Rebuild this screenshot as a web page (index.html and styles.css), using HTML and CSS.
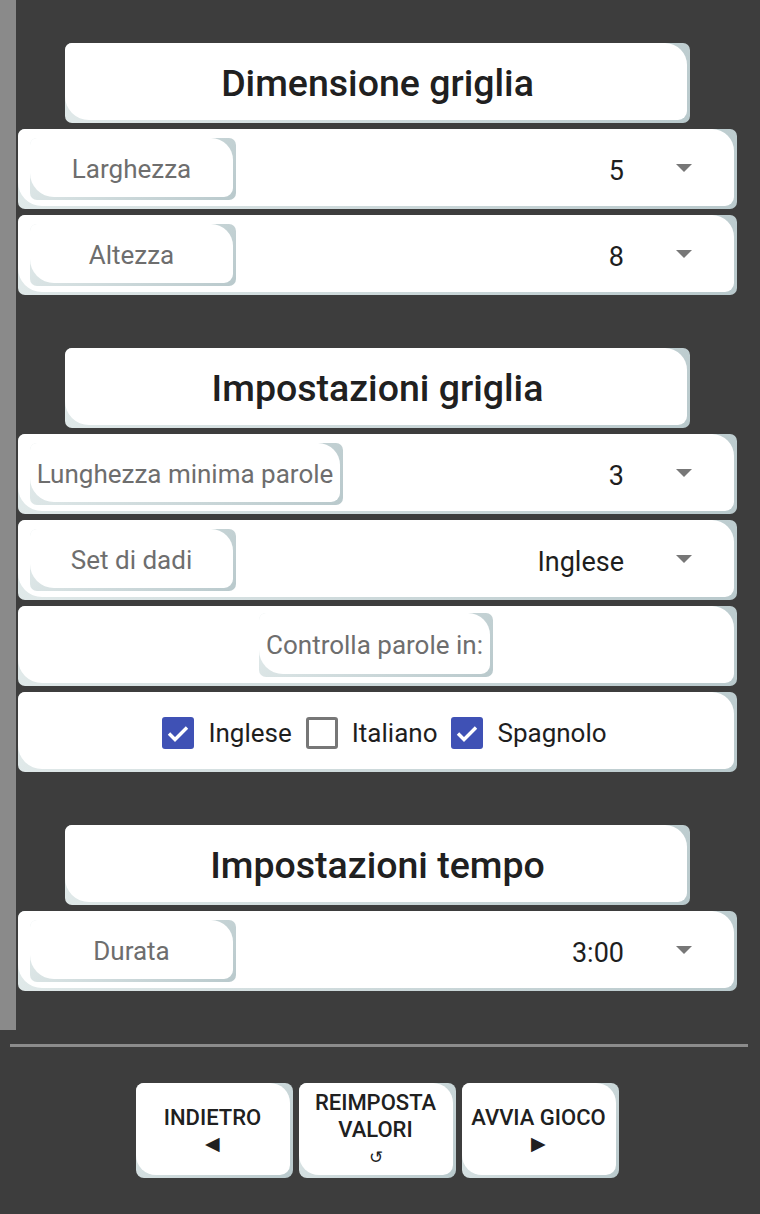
FILE: index.html
```html
<!DOCTYPE html>
<html lang="it">

<head>
  <meta charset="UTF-8" />
  <meta name="viewport" content="width=device-width, initial-scale=1.0" />
  <title>Impostazioni partita</title>
  <link rel="stylesheet" href="styles.css">
</head>

<body>
  <main class="settings">
    <div class="card header">
      <div class="face"><h2>Dimensione griglia</h2></div>
    </div>
    <div class="card row">
      <div class="face">
        <div class="card pill"><div class="face">Larghezza</div></div>
        <span class="value">5</span>
        <span class="arrow"></span>
      </div>
    </div>
    <div class="card row">
      <div class="face">
        <div class="card pill"><div class="face">Altezza</div></div>
        <span class="value">8</span>
        <span class="arrow"></span>
      </div>
    </div>

    <div class="card header spaced">
      <div class="face"><h2>Impostazioni griglia</h2></div>
    </div>
    <div class="card row">
      <div class="face">
        <div class="card pill wide"><div class="face">Lunghezza minima parole</div></div>
        <span class="value">3</span>
        <span class="arrow"></span>
      </div>
    </div>
    <div class="card row">
      <div class="face">
        <div class="card pill"><div class="face">Set di dadi</div></div>
        <span class="value">Inglese</span>
        <span class="arrow"></span>
      </div>
    </div>
    <div class="card row">
      <div class="face centered">
        <div class="card pill check-title"><div class="face">Controlla parole in:</div></div>
      </div>
    </div>
    <div class="card row">
      <div class="face centered checks">
        <label class="check"><span class="box on"></span>Inglese</label>
        <label class="check"><span class="box"></span>Italiano</label>
        <label class="check"><span class="box on"></span>Spagnolo</label>
      </div>
    </div>

    <div class="card header spaced">
      <div class="face"><h2>Impostazioni tempo</h2></div>
    </div>
    <div class="card row">
      <div class="face">
        <div class="card pill"><div class="face">Durata</div></div>
        <span class="value">3:00</span>
        <span class="arrow"></span>
      </div>
    </div>
  </main>

  <footer class="footer">
    <hr class="divider">
    <div class="buttons">
      <button class="card btn"><span class="face">INDIETRO<small>&#9664;</small></span></button>
      <button class="card btn"><span class="face">REIMPOSTA<br>VALORI<small class="reset">&#8634;</small></span></button>
      <button class="card btn"><span class="face">AVVIA GIOCO<small>&#9654;</small></span></button>
    </div>
  </footer>
</body>

</html>
```

FILE: styles.css
```css
* {
  margin: 0;
  padding: 0;
  box-sizing: border-box;
  font-family: Roboto, 'Noto Sans', sans-serif;
}

body {
  background-color: #3d3d3d;
  width: 760px;
  height: 1214px;
  overflow: hidden;
}

.settings {
  height: 1030px;
  border-left: 16px solid #8a8a8a;
  padding: 43px 23px 0 2px;
  display: flex;
  flex-direction: column;
  gap: 6px;
}

/* bevelled white cards: blue-grey base with a white face on top */
.card {
  background: linear-gradient(135deg, #e4ecec 0%, #b9c9cc 100%);
  border-radius: 7px;
  display: flex;
}

.card > .face {
  flex: 1;
  background-color: #fff;
  border-radius: 7px 22px 9px 24px;
  margin: 0 3px 3px 0;
  display: flex;
  align-items: center;
}

.header {
  height: 80px;
  margin: 0 47px;
}

.header > .face {
  justify-content: center;
}

.header.spaced {
  margin-top: 47px;
}

h2 {
  font-size: 37.5px;
  font-weight: 500;
  color: #202020;
  padding: 2px 0 0 3px;
}

.row {
  height: 80px;
}

.row > .face {
  padding: 0 42px 0 12px;
}

.pill {
  width: 206px;
  height: 62px;
  margin-top: 3px;
}

.pill > .face {
  justify-content: center;
  font-size: 26px;
  color: #6e6e6e;
  white-space: nowrap;
  padding-top: 3px;
}

.pill.wide {
  width: 313px;
}

.value {
  margin-left: auto;
  font-size: 27px;
  color: #1e1e1e;
  padding-top: 6px;
}

.arrow {
  width: 0;
  height: 0;
  border-left: 8px solid transparent;
  border-right: 8px solid transparent;
  border-top: 8px solid #777;
  margin-left: 52px;
}

.row > .face.centered {
  justify-content: center;
  padding: 0;
}

.pill.check-title {
  width: 234px;
  height: 64px;
  margin-top: 0;
}

.row > .face.checks {
  gap: 14px;
  padding-left: 17px;
}

.check {
  display: flex;
  align-items: center;
  gap: 14px;
  font-size: 26px;
  color: #1e1e1e;
  padding-top: 4px;
}

.box {
  width: 32px;
  height: 32px;
  border: 3px solid #777;
  border-radius: 3px;
}

.box.on {
  border: none;
  background: #3f51b5 url("data:image/svg+xml,%3Csvg xmlns='http://www.w3.org/2000/svg' viewBox='0 0 32 32'%3E%3Cpath d='M7 16.5l6 6L25 10.5' fill='none' stroke='%23fff' stroke-width='3.4'/%3E%3C/svg%3E") no-repeat center / 100%;
}

.footer {
  padding-top: 14px;
}

.divider {
  border: none;
  height: 3px;
  background-color: #8c8c8c;
  margin: 0 12px 0 10px;
}

.buttons {
  display: flex;
  justify-content: center;
  gap: 6px;
  margin-top: 36px;
  padding-right: 6px;
}

.btn {
  width: 157px;
  height: 95px;
  border: none;
  border-radius: 8px;
}

.btn > .face {
  flex-direction: column;
  justify-content: center;
  font-size: 22px;
  font-weight: 500;
  line-height: 27px;
  color: #202020;
  border-radius: 8px 20px 10px 20px;
  padding-top: 2px;
}

.btn small {
  font-size: 19px;
  line-height: 26px;
  font-weight: 400;
}

.btn small.reset {
  font-size: 17px;
  line-height: 28px;
}
```
